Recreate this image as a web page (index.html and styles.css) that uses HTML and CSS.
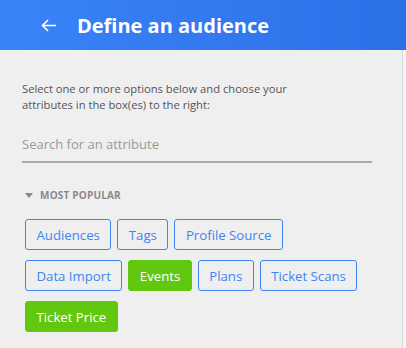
FILE: index.html
```html
<!DOCTYPE html>
<html lang="en">
<head>
    <meta charset="UTF-8">
    <meta name="viewport" content="width=device-width, initial-scale=1.0">
    <title>Define an audience</title>
    <link rel="stylesheet" href="styles.css">
</head>
<body>
    <div class="panel">
        <header class="topbar">
            <span class="back">
                <svg width="16" height="13" viewBox="0 0 16 13">
                    <path d="M15 6.5H1.5M7 1L1.5 6.5L7 12" fill="none" stroke="#fff" stroke-width="1.6"/>
                </svg>
            </span>
            <h1>Define an audience</h1>
        </header>

        <div class="content">
            <p class="intro">Select one or more options below and choose your<br>attributes in the box(es) to the right:</p>

            <input type="text" class="search" placeholder="Search for an attribute">

            <div class="section-title">
                <span class="caret"></span>
                MOST POPULAR
            </div>

            <div class="options">
                <button class="option">Audiences</button>
                <button class="option">Tags</button>
                <button class="option">Profile Source</button>
                <button class="option">Data Import</button>
                <button class="option selected">Events</button>
                <button class="option">Plans</button>
                <button class="option">Ticket Scans</button>
                <button class="option selected">Ticket Price</button>
            </div>
        </div>
    </div>
</body>
</html>
```

FILE: styles.css
```css
body {
    font-family: "Open Sans", sans-serif;
    background-color: #f4f4f4;
    margin: 0;
    padding: 0;
}

.panel {
    width: 402px;
    height: 348px;
    background-color: #efefef;
    border-right: 1px solid #d8d8d8;
}

.topbar {
    display: flex;
    align-items: center;
    height: 50px;
    width: 406px;
    padding-left: 41px;
    box-sizing: border-box;
    background: linear-gradient(90deg, #3a83f8, #2c70e8);
}

.back {
    display: flex;
    width: 16px;
    margin-right: 20px;
}

.topbar h1 {
    margin: 0;
    color: white;
    font-size: 20px;
    font-weight: bold;
}

.content {
    padding: 31px 30px 0 22px;
}

.intro {
    margin: 0;
    font-size: 11.2px;
    line-height: 16px;
    color: #555;
}

.search {
    display: block;
    width: 350px;
    margin-top: 17px;
    padding: 5px 0 8px;
    border: none;
    border-bottom: 2px solid #aaa;
    background: transparent;
    font-family: inherit;
    font-size: 13px;
    color: #444;
    outline: none;
}

.search::placeholder {
    color: #999;
}

.section-title {
    display: flex;
    align-items: center;
    margin-top: 25px;
    padding-left: 3px;
    font-size: 10px;
    font-weight: bold;
    color: #8a8a8a;
    letter-spacing: 0.2px;
}

.caret {
    width: 0;
    height: 0;
    border-left: 4px solid transparent;
    border-right: 4px solid transparent;
    border-top: 5px solid #888;
    margin-right: 7px;
}

.options {
    display: flex;
    flex-wrap: wrap;
    gap: 10px 6px;
    margin-top: 17px;
    padding-left: 3px;
    width: 340px;
}

.option {
    height: 31px;
    padding: 0 10.5px;
    border: 1px solid #3d85f5;
    border-radius: 3px;
    background: transparent;
    color: #3d85f5;
    font-family: inherit;
    font-size: 13.2px;
    cursor: pointer;
}

.option.selected {
    background-color: #62c70f;
    border-color: #62c70f;
    color: white;
}
```
